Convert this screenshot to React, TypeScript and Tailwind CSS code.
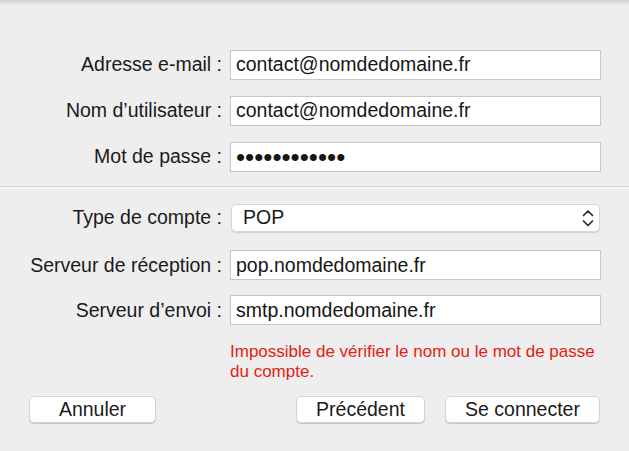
import React from "react";

type RowProps = { label: string; className?: string; children: React.ReactNode };

function Row({ label, className = "", children }: RowProps) {
  return (
    <div className={`flex items-center ${className}`}>
      <div className="w-[222px] shrink-0 text-right text-[19.5px] text-[#1a1a1a] whitespace-nowrap">
        {label}
      </div>
      <div className="ml-[8px] flex-1">{children}</div>
    </div>
  );
}

function TextField({ value, big = false }: { value: string; big?: boolean }) {
  return (
    <div className="h-[30px] bg-white border border-[#c8c8c8] flex items-center px-[5px] text-[19.5px] text-[#161616] overflow-hidden whitespace-nowrap">
      {big ? <span className="text-[26px] leading-none -mt-[1px]">{value}</span> : value}
    </div>
  );
}

function Button({ label, className = "" }: { label: string; className?: string }) {
  return (
    <button
      className={`h-[27px] bg-white rounded-[5px] border border-[#d4d4d4] shadow-[0_1px_1px_rgba(0,0,0,0.18)] text-[19.5px] leading-none text-[#1a1a1a] flex items-center justify-center ${className}`}
    >
      {label}
    </button>
  );
}

export default function App() {
  return (
    <div className="w-[629px] h-[451px] bg-[#eeeeee] flex flex-col overflow-hidden font-['Liberation_Sans',Arial,sans-serif]">
      {/* window top shadow */}
      <div className="h-[6px] shrink-0 bg-gradient-to-b from-[#d3d3d3] to-[#eeeeee]" />

      <div className="pr-[28px] pt-[44px] flex flex-col">
        <Row label="Adresse e-mail :">
          <TextField value="contact@nomdedomaine.fr" />
        </Row>
        <Row label="Nom d’utilisateur :" className="mt-[16px]">
          <TextField value="contact@nomdedomaine.fr" />
        </Row>
        <Row label="Mot de passe :" className="mt-[16px]">
          <TextField value="••••••••••••" big />
        </Row>
      </div>

      <div className="mt-[14px] h-[1px] bg-[#d5d5d5] shrink-0" />
      <div className="h-[1px] bg-[#f6f6f6] shrink-0" />

      <div className="pr-[28px] flex flex-col">
        <Row label="Type de compte :" className="mt-[15px]">
          <div className="mx-[1px] h-[28px] bg-white rounded-[5px] border border-[#d6d6d6] shadow-[0_1px_1px_rgba(0,0,0,0.12)] flex items-center pl-[11px] pr-[5px] text-[19.5px] text-[#1a1a1a]">
            <span className="flex-1">POP</span>
            <svg width="12" height="20" viewBox="0 0 12 20" fill="none">
              <path d="M1.5 7.5 L6 3 L10.5 7.5" stroke="#2b2b2b" strokeWidth="1.7" strokeLinecap="round" strokeLinejoin="round" />
              <path d="M1.5 13 L6 17.5 L10.5 13" stroke="#2b2b2b" strokeWidth="1.7" strokeLinecap="round" strokeLinejoin="round" />
            </svg>
          </div>
        </Row>
        <Row label="Serveur de réception :" className="mt-[18px]">
          <TextField value="pop.nomdedomaine.fr" />
        </Row>
        <Row label="Serveur d’envoi :" className="mt-[15px]">
          <TextField value="smtp.nomdedomaine.fr" />
        </Row>
      </div>

      <div className="ml-[230px] mt-[17px] w-[380px] text-[17px] leading-[20px] text-[#e51c14]">
        Impossible de vérifier le nom ou le mot de passe
        <br />
        du compte.
      </div>

      <div className="mt-[14px] flex items-center px-[29px]">
        <Button label="Annuler" className="w-[127px]" />
        <div className="flex-1" />
        <Button label="Précédent" className="w-[129px]" />
        <Button label="Se connecter" className="w-[155px] ml-[20px]" />
      </div>
    </div>
  );
}
